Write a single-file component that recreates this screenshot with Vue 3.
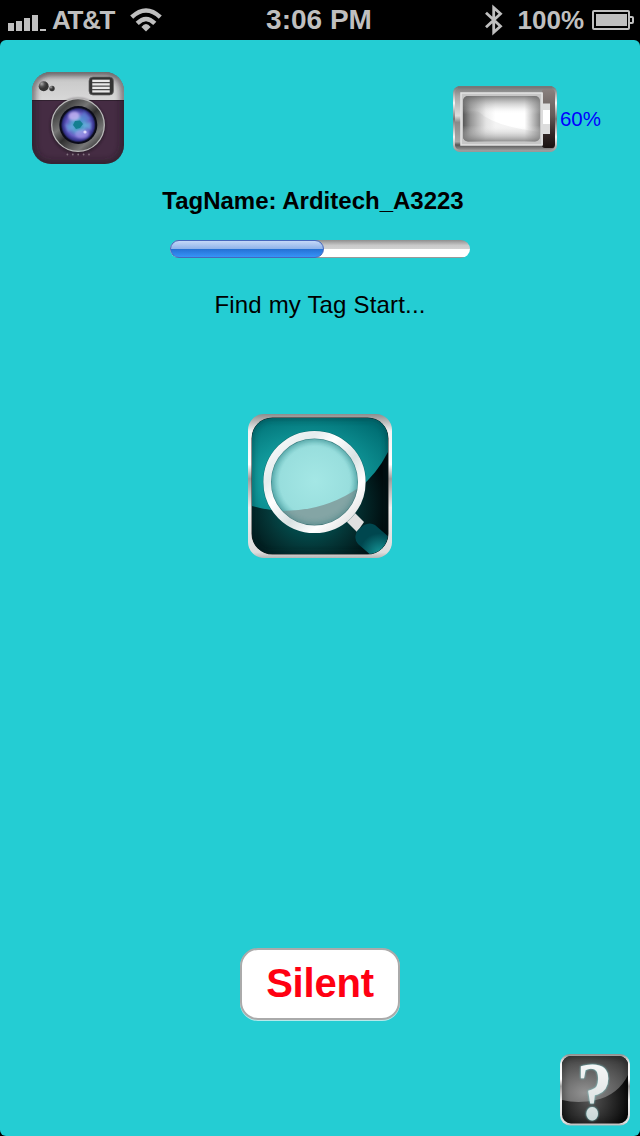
<template>
  <div class="screen">
    <header class="status">
      <div class="status-left">
        <svg class="signal" width="38" height="18" viewBox="0 0 38 18" fill="#bfbfbf">
          <rect v-for="(h, i) in signalBars" :key="i" :x="i * 8" :y="18 - h" width="6" :height="h" />
        </svg>
        <span class="carrier">AT&amp;T</span>
        <svg class="wifi" width="32" height="24" viewBox="0 0 32 24" fill="none" stroke="#bfbfbf" stroke-width="4.4">
          <path d="M1.7 9.2 Q16 -4.2 30.3 9.2" />
          <path d="M7.2 15.4 Q16 6.6 24.8 15.4" />
          <path d="M16 23.6 L11.4 18.9 Q16 13.3 20.6 18.9 Z" fill="#bfbfbf" stroke="none" />
        </svg>
      </div>
      <span class="clock">3:06 PM</span>
      <div class="status-right">
        <svg class="bluetooth" width="18" height="32" viewBox="0 0 18 32" fill="none" stroke="#bfbfbf" stroke-width="2.8">
          <path d="M1 8.8 L15.5 22.3 L8.7 28.4 V3.6 L15.5 9.7 L1 23.2" />
        </svg>
        <span class="charge">100%</span>
        <svg width="42" height="20" viewBox="0 0 42 20" fill="none" stroke="#bfbfbf" stroke-width="2">
          <rect x="1" y="1" width="36" height="18" rx="1" />
          <rect x="4" y="4" width="31" height="12" fill="#bfbfbf" stroke="none" />
          <path d="M38 7 H40 Q41 7 41 8 V12 Q41 13 40 13 H38" />
        </svg>
      </div>
    </header>

    <main class="page">
      <div class="top-row">
        <svg class="camera" width="92" height="92" viewBox="0 0 92 92">
          <defs>
            <clipPath id="camClip"><rect width="92" height="92" rx="19" /></clipPath>
            <linearGradient id="camTop" x2="0" y2="1">
              <stop offset="0" stop-color="#a9a9a9" />
              <stop offset=".25" stop-color="#c9c9c9" />
              <stop offset="1" stop-color="#d8d8d8" />
            </linearGradient>
            <linearGradient id="ring" x1=".1" y1=".05" x2=".9" y2=".95">
              <stop offset="0" stop-color="#777" />
              <stop offset=".15" stop-color="#454545" />
              <stop offset=".35" stop-color="#757575" />
              <stop offset=".52" stop-color="#303030" />
              <stop offset=".8" stop-color="#777" />
              <stop offset="1" stop-color="#292929" />
            </linearGradient>
            <radialGradient id="lens">
              <stop offset="0" stop-color="#2999ae" />
              <stop offset=".38" stop-color="#5d9ed2" />
              <stop offset=".68" stop-color="#6860c5" />
              <stop offset=".9" stop-color="#35338b" />
              <stop offset="1" stop-color="#11132c" />
            </radialGradient>
            <radialGradient id="knob" cx=".3" cy=".25">
              <stop offset="0" stop-color="#aaa" />
              <stop offset=".6" stop-color="#505050" />
              <stop offset="1" stop-color="#353535" />
            </radialGradient>
            <filter id="soft3" x="-20%" y="-20%" width="140%" height="140%"><feGaussianBlur stdDeviation="3" /></filter>
            <filter id="soft1" x="-30%" y="-30%" width="160%" height="160%"><feGaussianBlur stdDeviation="1" /></filter>
          </defs>
          <g clip-path="url(#camClip)">
            <rect width="92" height="92" fill="#452c43" />
            <rect width="92" height="28.5" fill="url(#camTop)" />
            <rect y="28" width="92" height="1" fill="#30202f" />
            <rect width="92" height="92" rx="19" fill="none" stroke="#211b22" stroke-width="5" opacity=".75" filter="url(#soft3)" />
            <circle cx="11.7" cy="14.3" r="5" fill="url(#knob)" />
            <circle cx="20" cy="16.5" r="2.7" fill="url(#knob)" />
            <rect x="57" y="5" width="24.5" height="18" rx="4" fill="#343434" stroke="#666" stroke-width=".7" />
            <rect x="60" y="7.2" width="18" height="13.5" fill="#4b4b4b" />
            <path d="M60.3 8.8 H77.7 M60.3 12.3 H77.7 M60.3 15.8 H77.7 M60.3 19.3 H77.7" stroke="#e8e8e8" stroke-width="2.2" />
            <circle cx="46" cy="54" r="28" fill="#211821" opacity=".55" filter="url(#soft1)" />
            <circle cx="46" cy="53" r="26.3" fill="url(#ring)" stroke="#b9b9b9" stroke-width="1.3" />
            <circle cx="46.3" cy="53" r="19" fill="#0b0b18" />
            <circle cx="46.3" cy="53" r="17.3" fill="url(#lens)" />
            <g filter="url(#soft1)">
              <ellipse cx="42" cy="44" rx="5.6" ry="4.6" fill="#c6b4f2" opacity=".8" />
              <ellipse cx="50" cy="62" rx="7" ry="4.5" fill="#a999ed" opacity=".65" />
              <path d="M46 52 L52 39 L59 47 Z" fill="#5186d2" opacity=".6" />
              <path d="M46 54 L33 52 L36 60 Z" fill="#68a7e0" opacity=".6" />
              <path d="M49 53 L59 50 L59 58 Z" fill="#68b7e0" opacity=".6" />
            </g>
            <path d="M43 49 L48 48.5 L51 52 L48 56 L44 57 L41 53 Z" fill="#147f91" />
            <circle cx="53" cy="60" r="1.6" fill="#e9e3ff" opacity=".9" />
            <circle v-for="n in 5" :key="n" :cx="30 + n * 5.4" cy="82.5" r=".9" fill="#82717f" />
          </g>
        </svg>

        <div class="tag-battery">
          <svg width="104" height="66" viewBox="0 0 104 66">
            <defs>
              <linearGradient id="batFrame" x2="0" y2="1">
                <stop offset="0" stop-color="#777" />
                <stop offset=".15" stop-color="#a6a6a6" />
                <stop offset=".45" stop-color="#ddd" />
                <stop offset=".55" stop-color="#898989" />
                <stop offset=".85" stop-color="#aaa" />
                <stop offset=".9" stop-color="#555" />
                <stop offset="1" stop-color="#aaa" />
              </linearGradient>
              <linearGradient id="batSide" x2="0" y2="1">
                <stop offset="0" stop-color="#8a817f" />
                <stop offset=".45" stop-color="#645a58" />
                <stop offset=".75" stop-color="#332827" />
                <stop offset="1" stop-color="#191110" />
              </linearGradient>
              <linearGradient id="batEdge" x2="0" y2="1">
                <stop offset="0" stop-color="#777" />
                <stop offset=".25" stop-color="#f5f5f5" />
                <stop offset=".5" stop-color="#777" />
                <stop offset=".78" stop-color="#f2f2f2" />
                <stop offset="1" stop-color="#999" />
              </linearGradient>
              <linearGradient id="cellSides">
                <stop offset="0" stop-color="#555" />
                <stop offset=".1" stop-color="#999" />
                <stop offset=".3" stop-color="#eee" />
                <stop offset=".42" stop-color="#fff" />
                <stop offset=".8" stop-color="#fff" />
                <stop offset="1" stop-color="#888" />
              </linearGradient>
              <linearGradient id="cellEnds" x2="0" y2="1">
                <stop offset="0" stop-color="#666" stop-opacity=".8" />
                <stop offset=".25" stop-color="#aaa" stop-opacity=".25" />
                <stop offset=".4" stop-color="#fff" stop-opacity="0" />
                <stop offset=".65" stop-color="#fff" stop-opacity="0" />
                <stop offset="1" stop-color="#777" stop-opacity=".8" />
              </linearGradient>
            </defs>
            <rect x=".5" y=".5" width="103" height="65" rx="6" fill="url(#batFrame)" />
            <rect x="89" y="3" width="13" height="59" rx="3" fill="url(#batSide)" />
            <rect x="1" y="1" width="102" height="64" rx="6" fill="none" stroke="url(#batEdge)" stroke-width="2" />
            <path d="M5 1.3 H99" stroke="#777" stroke-width="2" />
            <rect x="89" y="17.5" width="8" height="30.5" fill="#dcdcdc" />
            <rect x="90" y="24" width="7" height="14" fill="#fff" />
            <rect x="8" y="7" width="82" height="52" fill="#c6c6c6" />
            <path d="M8 59 V7 H89 V59 Z" fill="none" stroke="#e3e3e3" stroke-width="1.5" />
            <rect x="10" y="10" width="77" height="45.5" rx="5" fill="url(#cellSides)" />
            <rect x="10" y="10" width="77" height="45.5" rx="5" fill="url(#cellEnds)" />
            <path d="M10 27 Q16 24 26 26 Q40 40 87 46 V50 Q87 55.5 82 55.5 H15 Q10 55.5 10 50 Z" fill="#777" opacity=".08" />
          </svg>
          <span class="tag-level">60%</span>
        </div>
      </div>

      <h1 class="tag-name">TagName: Arditech_A3223</h1>
      <div class="track">
        <div class="fill" :style="{ width: `${progress}px` }" />
      </div>
      <p class="message">Find my Tag Start...</p>

      <svg class="finder" width="144" height="144" viewBox="0 0 144 144">
        <defs>
          <linearGradient id="chrome" x2="0" y2="1">
            <stop offset="0" stop-color="#8d8d8d" />
            <stop offset=".12" stop-color="#f2f2f2" />
            <stop offset=".35" stop-color="#fff" />
            <stop offset=".45" stop-color="#9d9d9d" />
            <stop offset=".65" stop-color="#eee" />
            <stop offset=".96" stop-color="#ddd" />
            <stop offset="1" stop-color="#b6b6b6" />
          </linearGradient>
          <radialGradient id="dark" cx=".42" cy=".65" r=".58">
            <stop offset="0" stop-color="#006b6b" />
            <stop offset=".55" stop-color="#043536" />
            <stop offset="1" stop-color="#000b0d" />
          </radialGradient>
          <radialGradient id="teal" cx=".4" cy=".65" r=".75">
            <stop offset="0" stop-color="#25b7b4" />
            <stop offset=".5" stop-color="#109799" />
            <stop offset="1" stop-color="#006e73" />
          </radialGradient>
          <linearGradient id="rim" x2="1" y2="1">
            <stop offset="0" stop-color="#fff" />
            <stop offset=".25" stop-color="#e5eced" />
            <stop offset=".38" stop-color="#fff" />
            <stop offset=".58" stop-color="#d9e2e3" />
            <stop offset=".75" stop-color="#fff" />
            <stop offset="1" stop-color="#d4d4d4" />
          </linearGradient>
          <radialGradient id="glass">
            <stop offset="0" stop-color="#a4e7e5" />
            <stop offset=".75" stop-color="#98dedd" />
            <stop offset="1" stop-color="#60b8b9" />
          </radialGradient>
          <radialGradient id="handle" cx=".6" cy=".75">
            <stop offset="0" stop-color="#159698" />
            <stop offset="1" stop-color="#00474f" />
          </radialGradient>
          <clipPath id="face"><rect x="4" y="4" width="136" height="136" rx="20" /></clipPath>
          <clipPath id="lensClip"><circle cx="66.5" cy="68" r="44" /></clipPath>
        </defs>
        <rect width="144" height="144" rx="16" fill="url(#chrome)" />
        <rect x="3.5" y="3.5" width="137" height="137" rx="21" fill="#222" />
        <g clip-path="url(#face)">
          <rect x="4" y="4" width="136" height="136" fill="url(#dark)" />
          <path d="M4 4 H140 V38 Q117 83 68 95 Q35 101 4 92 Z" fill="url(#teal)" />
          <rect x="3" y="3" width="138" height="138" rx="20" fill="none" stroke="#002125" stroke-width="4" opacity=".5" filter="url(#soft3)" />
          <path d="M98 107 L105 97 L116 108 L109 118 Z" fill="#e0e0e0" />
          <path d="M108 120 Q108 117 111 115 L116 111 Q122 108 127 111 L148 129 L132 149 L110 130 Q106 125 108 120 Z" fill="url(#handle)" />
          <g clip-path="url(#lensClip)">
            <rect x="20" y="20" width="94" height="94" fill="url(#glass)" />
            <path d="M24 96.5 Q74 100 113 72 V116 H24 Z" fill="#84a5a5" />
            <circle cx="66.5" cy="68" r="45" fill="none" stroke="#276f73" stroke-width="5" opacity=".6" filter="url(#soft3)" />
          </g>
          <circle cx="66.5" cy="68" r="47.3" fill="none" stroke="#09484a" stroke-width="8.6" opacity=".45" />
          <circle cx="66.5" cy="68" r="47.3" fill="none" stroke="url(#rim)" stroke-width="7.6" />
        </g>
      </svg>

      <button class="silent">Silent</button>

      <svg class="help" width="70" height="72" viewBox="0 0 70 72">
        <defs>
          <radialGradient id="helpDark" cx=".42" cy=".65" r=".6">
            <stop offset="0" stop-color="#555" />
            <stop offset="1" stop-color="#080808" />
          </radialGradient>
          <radialGradient id="helpGloss" cx=".35" cy=".8" r=".9">
            <stop offset="0" stop-color="#929292" />
            <stop offset="1" stop-color="#383838" />
          </radialGradient>
          <linearGradient id="mark" x2="0" y2="1">
            <stop offset="0" stop-color="#fff" />
            <stop offset=".6" stop-color="#e0e5e5" />
            <stop offset="1" stop-color="#b4cccc" />
          </linearGradient>
          <clipPath id="helpFace"><rect x="2" y="2" width="66" height="67.5" rx="9" /></clipPath>
        </defs>
        <rect width="70" height="71.5" rx="10" fill="url(#chrome)" />
        <g clip-path="url(#helpFace)">
          <rect x="2" y="2" width="66" height="68" fill="url(#helpDark)" />
          <path d="M2 2 H68 V21 Q58 41 36 46 Q18 50 2 46 Z" fill="url(#helpGloss)" />
          <rect x="1" y="1" width="68" height="70" rx="10" fill="none" stroke="#000" stroke-width="3" opacity=".5" filter="url(#soft3)" />
        </g>
        <text class="mark" transform="translate(34.5 65) scale(.88 1)" text-anchor="middle" fill="url(#mark)">?</text>
      </svg>
    </main>
  </div>
</template>

<script setup>
const signalBars = [8, 10, 13, 16, 2]
const progress = 154
</script>

<style>
body {
  background: #000;
}
</style>

<style scoped>
.screen {
  width: 640px;
  height: 1136px;
  display: flex;
  flex-direction: column;
  background: #000;
  font-family: "Liberation Sans", Arial, sans-serif;
}

.status {
  height: 40px;
  flex: none;
  display: grid;
  grid-template-columns: 1fr auto 1fr;
  align-items: center;
  color: #bfbfbf;
  font-weight: bold;
  font-size: 26px;
  line-height: 40px;
}

.status-left,
.status-right {
  display: flex;
  align-items: center;
}

.status-left {
  padding-left: 8px;
}

.signal {
  margin-top: 4px;
}

.carrier {
  width: 63px;
  margin-left: 6px;
  letter-spacing: -1.3px;
}

.wifi {
  margin-left: 15px;
}

.clock {
  margin-right: 2px;
  font-size: 28px;
}

.status-right {
  justify-content: flex-end;
  padding-right: 6px;
}

.charge {
  margin: 0 8px 0 15px;
}

.page {
  flex: 1;
  display: flex;
  flex-direction: column;
  align-items: center;
  background: #24cdd3;
  border-radius: 6px;
}

.page svg {
  display: block;
  flex: none;
}

.top-row {
  align-self: stretch;
  display: flex;
  justify-content: space-between;
  padding: 32px 39px 0 32px;
}

.tag-battery {
  display: flex;
  align-items: center;
  height: 66px;
  margin-top: 14px;
}

.tag-level {
  margin-left: 3px;
  color: #00f;
  font-size: 20.5px;
}

.tag-name {
  margin: 22px 14px 0 0;
  font-size: 24px;
  line-height: 30px;
  color: #000;
}

.track {
  width: 300px;
  height: 18px;
  margin-top: 24px;
  border-radius: 9px;
  background: linear-gradient(#8e8e8e, #c9c9c9 30%, #d2d2d2 50%, #fff 50%, #fff 92%, #999 96%);
}

.fill {
  height: 18px;
  box-sizing: border-box;
  border: 1px solid #4667bd;
  border-radius: 9px;
  background: linear-gradient(#c4d8f8, #8eb2e9 50%, #2470d4 50%, #3794f8);
}

.message {
  margin: 32px 0 0;
  font-size: 24px;
  line-height: 30px;
  letter-spacing: 0.18px;
  color: #000;
}

.finder {
  margin-top: 94px;
}

.silent {
  width: 160px;
  height: 72px;
  margin-top: 390px;
  padding: 0 0 2px;
  border: 2px solid #aaa;
  border-radius: 18px;
  background: #fff;
  box-shadow: 0 1px 0 #b8e9eb;
  color: #ff0012;
  font: bold 40px "Liberation Sans", Arial, sans-serif;
  letter-spacing: -0.2px;
}

.page .help {
  align-self: flex-end;
  margin: 34px 10px 0 0;
  overflow: visible;
}

.mark {
  font-family: "Liberation Serif", serif;
  font-size: 82px;
  font-weight: bold;
  filter: drop-shadow(0 0 1px #7cd6d6);
}
</style>
